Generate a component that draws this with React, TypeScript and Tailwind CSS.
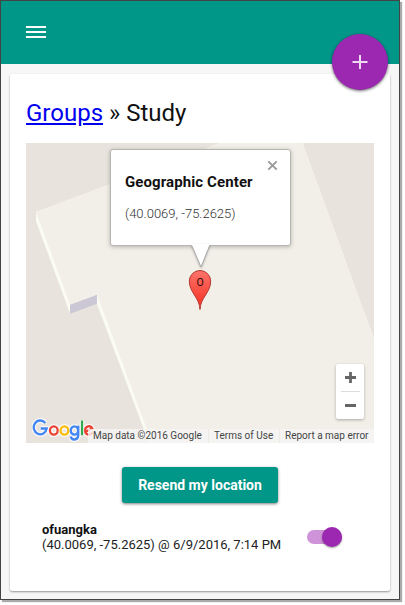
import React from "react";

function MapGround() {
  return (
    <svg className="block h-[300px] w-[348px]" viewBox="26 143 348 300">
      <rect x="26" y="143" width="348" height="300" fill="#e8e4dd" />
      <path d="M36 212V221L70 313.5V305L97 295V304L149 443H374V339L302.500 143H220Z" fill="#fafbf1" />
      <path d="M36 212L70 304.500L97 294.500L152 443H374V339L302.500 143H220Z" fill="#f2efe8" />
      <path d="M70 304.700L97 294.700V303.700L70 313.700Z" fill="#cbc7d5" />
    </svg>
  );
}

function InfoWindow() {
  return (
    <div className="absolute left-[84px] top-[6px] h-[97px] w-[181px] rounded-[3px] border border-[#b5b5b1] bg-white px-3.5 pt-[22px] shadow-[0_1px_4px_rgba(0,0,0,0.25)]">
      <div className="text-[15px] font-bold leading-5 tracking-[0.1px] text-[#111] whitespace-nowrap">Geographic Center</div>
      <div className="mt-3 text-[13px] font-light leading-5 text-[#333] whitespace-nowrap">(40.0069, -75.2625)</div>
      <svg className="absolute right-[12px] top-[10px] size-[11px]" viewBox="0 0 11 11">
        <path d="M1.300 1.300L9.700 9.700M9.700 1.300L1.300 9.700" stroke="#999" strokeWidth="1.900" />
      </svg>
      <svg className="absolute left-[78px] top-[94px] h-[28px] w-[24px] overflow-visible drop-shadow-[0_1px_1px_rgba(0,0,0,0.25)]" viewBox="0 0 24 28">
        <path d="M2 0L12 23L21 0" fill="#fff" />
        <path d="M2.800 1.500L12 23L20.700 1.500" fill="none" stroke="#aaa" />
      </svg>
    </div>
  );
}

function Marker() {
  return (
    <svg className="absolute left-[162px] top-[126px] h-[42px] w-[24px]" viewBox="0 0 24 42">
      <defs>
        <linearGradient id="pin" x1="0" y1="0" x2="0" y2="1">
          <stop offset="0" stopColor="#fc746b" />
          <stop offset=".75" stopColor="#f73d32" />
        </linearGradient>
      </defs>
      <path d="M12 40.500C11.500 28.500 1.300 23.500 1.300 12.200A10.700 10.700 0 0 1 22.700 12.200C22.700 23.500 12.500 28.500 12 40.500Z" fill="url(#pin)" stroke="#b63a32" />
      <text x="12" y="16.500" textAnchor="middle" fontSize="10.500" fill="#2b0806">O</text>
    </svg>
  );
}

function GoogleLogo() {
  return (
    <svg className="absolute left-[6px] top-[275px] h-[25px] w-[63px]" viewBox="-0.5 0 67 25" preserveAspectRatio="none">
      <defs>
        <g id="logo" fill="none" strokeWidth="2.400">
          <path d="M13.600 5A6.900 6.900 0 1 0 15.100 10.500H8.800" stroke="#4285f4" />
          <circle cx="22.700" cy="12.500" r="4.100" stroke="#ea4335" />
          <circle cx="34" cy="12.500" r="4.100" stroke="#fbbc05" />
          <path d="M48.700 7.800V17C48.700 22.500 42 22.800 40.600 18.700M48.500 12.500A3.900 4.100 0 1 1 40.700 12.500A3.900 4.100 0 1 1 48.500 12.500" stroke="#4285f4" />
          <path d="M52.700 2.500V17.200" stroke="#34a853" />
          <path d="M57 13.500L63.700 10.700C61.700 6.500 56 8.300 56 12.500C56 17.200 61.700 18 64 14.500" stroke="#ea4335" />
        </g>
      </defs>
      <g stroke="#fff" strokeWidth="5" fill="none" opacity=".75" strokeLinejoin="round">
        <path d="M13.600 5A6.900 6.900 0 1 0 15.100 10.500H8.800M48.700 7.800V17C48.700 22.500 42 22.800 40.600 18.700M52.700 2.500V17.200M57 13.500L63.700 10.700C61.700 6.500 56 8.300 56 12.500C56 17.200 61.700 18 64 14.500" />
        <circle cx="22.700" cy="12.500" r="4.100" />
        <circle cx="34" cy="12.500" r="4.100" />
        <circle cx="44.600" cy="12.500" r="4.100" />
      </g>
      <use href="#logo" />
    </svg>
  );
}

function ZoomControl() {
  return (
    <div className="absolute left-[310px] top-[221px] flex h-[55px] w-[28px] flex-col items-center rounded-[2px] bg-white shadow-[0_1px_3px_rgba(0,0,0,0.3)]">
      <svg className="h-[27px] w-[28px]" viewBox="0 0 28 27">
        <path d="M9 13.500H20M14.500 8V19" stroke="#666" strokeWidth="2.800" />
      </svg>
      <div className="h-px w-[19px] bg-[#ddd]" />
      <svg className="h-[27px] w-[28px]" viewBox="0 0 28 27">
        <path d="M9 13.500H20" stroke="#666" strokeWidth="3" />
      </svg>
    </div>
  );
}

export default function App() {
  return (
    <div className="h-[605px] w-[405px] overflow-hidden bg-white font-['Roboto',sans-serif]">
      <div className="relative h-[600px] w-[400px] border border-[#444] bg-[#f7f7f7] shadow-[2px_2px_1px_#aaa]">
        <header className="h-[63px] bg-[#009688] pl-[25px] pt-[25px]">
          <svg className="h-3 w-5" viewBox="0 0 20 12">
            <path d="M0 1H20M0 6H20M0 11H20" stroke="#fff" strokeWidth="2" />
          </svg>
        </header>
        <button className="absolute left-[331px] top-[33px] grid size-14 place-items-center rounded-full bg-[#9c27b0] shadow-[0_1px_3px_rgba(0,0,0,0.6)]">
          <svg className="size-4" viewBox="0 0 16 16">
            <path d="M.5 8H15.500M8 1V15" stroke="#efd9f2" strokeWidth="2" />
          </svg>
        </button>
        <main className="ml-[9px] mt-[10px] h-[517px] w-[380px] rounded-[2px] bg-white px-4 pt-[23px] shadow-[0_1px_2px_rgba(0,0,0,0.4)]">
          <h1 className="h-[46px] text-[24px] leading-8 text-[#111] whitespace-nowrap">
            <a className="text-[#0000ee] underline" href="#">Groups</a> » Study
          </h1>
          <div className="relative h-[300px] w-[348px] overflow-hidden">
            <MapGround />
            <GoogleLogo />
            <div className="absolute bottom-0 right-0 flex h-[14px] bg-[#f5f5f5]/80 text-[10px] leading-[14px] text-[#444] whitespace-nowrap">
              <span className="w-[120px] pl-[5px]">Map data ©2016 Google</span>
              <span className="w-[71px] border-l border-[#eeeae4] pl-[5px]">Terms of Use</span>
              <span className="w-[95px] border-l border-[#eeeae4] pl-[5px]">Report a map error</span>
            </div>
            <InfoWindow />
            <Marker />
            <ZoomControl />
          </div>
          <button className="mx-auto mt-6 block h-9 w-[156px] rounded-[3px] bg-[#009688] text-[14px] font-bold leading-9 text-white shadow-[0_1px_3px_rgba(0,0,0,0.5)] whitespace-nowrap">Resend my location</button>
          <div className="mt-[19px] flex justify-between pl-4 pr-8">
            <div className="text-[13px] leading-[15px] text-[#222] whitespace-nowrap">
              <div className="font-bold text-[#111]">ofuangka</div>
              <div>(40.0069, -75.2625) @ 6/9/2016, 7:14 PM</div>
            </div>
            <div className="mt-[8px] flex h-[14px] w-[35px] items-center justify-end rounded-full bg-[#ce93d8]">
              <div className="size-5 shrink-0 rounded-full bg-[#9c27b0] shadow-[0_1px_2px_rgba(0,0,0,0.4)]" />
            </div>
          </div>
        </main>
      </div>
    </div>
  );
}
